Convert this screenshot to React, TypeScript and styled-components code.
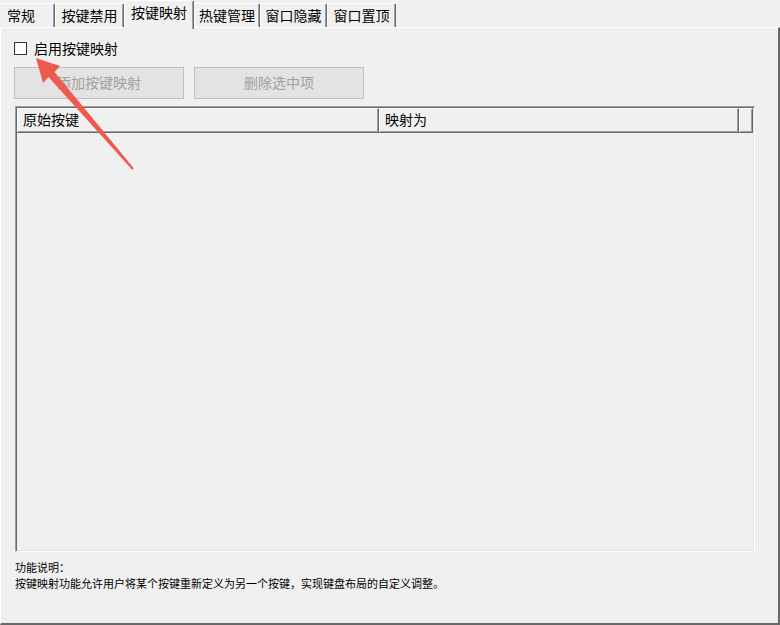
import React from 'react';
import styled, { createGlobalStyle } from 'styled-components';

const GlobalStyle = createGlobalStyle`
  html, body {
    margin: 0;
    padding: 0;
    background: #f0f0f0;
  }
  body {
    font-family: "Noto Sans CJK SC", "Noto Sans", sans-serif;
    color: #000;
  }
`;

const Window = styled.div`
  position: relative;
  width: 780px;
  height: 625px;
  background: #f0f0f0;
  display: flex;
  flex-direction: column;
  overflow: hidden;
`;

const TabStrip = styled.div`
  height: 27px;
  margin-left: -13px;
  display: flex;
  align-items: flex-end;
  position: relative;
  z-index: 1;
`;

const Tab = styled.div<{ $active?: boolean; $width: number }>`
  box-sizing: border-box;
  width: ${({ $width }) => $width}px;
  height: ${({ $active }) => ($active ? '29px' : '24px')};
  margin-bottom: ${({ $active }) => ($active ? '-2px' : '0')};
  padding-top: ${({ $active }) => ($active ? '1px' : '1px')};
  background: #f0f0f0;
  border-top: 1px solid #fff;
  border-left: 1px solid #fff;
  border-right: 1px solid #696969;
  box-shadow: inset -1px 0 0 #a0a0a0;
  border-radius: 2px 2px 0 0;
  font-size: 14px;
  line-height: 20px;
  text-align: center;
  white-space: nowrap;
`;

const Panel = styled.div`
  flex: 1;
  display: flex;
  flex-direction: column;
  box-sizing: border-box;
  border-top: 1px solid #fff;
  border-left: 1px solid #fff;
  border-right: 2px solid #696969;
  border-bottom: 2px solid #696969;
  padding: 13px 23px 0 13px;
`;

const CheckRow = styled.label`
  display: flex;
  align-items: center;
  gap: 7px;
  height: 14px;
  font-size: 14px;
`;

const CheckBox = styled.span`
  box-sizing: border-box;
  width: 13px;
  height: 13px;
  border: 1px solid #333;
  background: #fff;
`;

const ButtonRow = styled.div`
  display: flex;
  gap: 10px;
  margin-top: 12px;
`;

const Button = styled.button`
  box-sizing: border-box;
  width: 170px;
  height: 32px;
  background: #e3e3e3;
  border: 1px solid #bfbfbf;
  color: #a0a0a0;
  font-family: inherit;
  font-size: 14px;
  padding: 0 0 2px;
`;

const ListView = styled.div`
  flex: 1;
  margin: 7px 0 0 1px;
  width: 740px;
  max-height: 446px;
  box-sizing: border-box;
  border-top: 1px solid #a0a0a0;
  border-left: 1px solid #a0a0a0;
  border-right: 1px solid #fff;
  border-bottom: 1px solid #fff;
  box-shadow: inset 1px 1px 0 #696969, inset -1px -1px 0 #e3e3e3;
  padding: 1px;
  display: flex;
  flex-direction: column;
`;

const HeaderRow = styled.div`
  display: flex;
  height: 24px;
  border-bottom: 1px solid #696969;
  box-shadow: 0 -1px 0 #a0a0a0 inset;
`;

const HeaderCell = styled.div<{ $width?: number }>`
  box-sizing: border-box;
  width: ${({ $width }) => ($width ? `${$width}px` : 'auto')};
  flex: ${({ $width }) => ($width ? 'none' : '1')};
  border-top: 1px solid #fff;
  border-left: 1px solid #fff;
  border-right: 1px solid #696969;
  box-shadow: inset -1px 0 0 #a0a0a0;
  padding-left: 5px;
  font-size: 14px;
  line-height: 21px;
`;

const ListBody = styled.div`
  flex: 1;
  background: #f0f0f0;
`;

const Description = styled.div`
  margin-top: 7px;
  padding-left: 1px;
  font-size: 11px;
  line-height: 16px;
`;

const ArrowOverlay = styled.svg`
  position: absolute;
  left: 0;
  top: 0;
  width: 780px;
  height: 625px;
  pointer-events: none;
  z-index: 5;
`;

const tabs = [
  { label: '常规', width: 68 },
  { label: '按键禁用', width: 69 },
  { label: '按键映射', width: 70, active: true },
  { label: '热键管理', width: 66 },
  { label: '窗口隐藏', width: 67 },
  { label: '窗口置顶', width: 69 },
];

export default function App() {
  return (
    <Window>
      <GlobalStyle />
      <TabStrip>
        {tabs.map(t => (
          <Tab key={t.label} $width={t.width} $active={t.active}>
            {t.label}
          </Tab>
        ))}
      </TabStrip>
      <Panel>
        <CheckRow>
          <CheckBox />
          启用按键映射
        </CheckRow>
        <ButtonRow>
          <Button disabled>添加按键映射</Button>
          <Button disabled>删除选中项</Button>
        </ButtonRow>
        <ListView>
          <HeaderRow>
            <HeaderCell $width={362}>原始按键</HeaderCell>
            <HeaderCell $width={360}>映射为</HeaderCell>
            <HeaderCell />
          </HeaderRow>
          <ListBody />
        </ListView>
        <Description>
          功能说明：
          <br />
          按键映射功能允许用户将某个按键重新定义为另一个按键，实现键盘布局的自定义调整。
        </Description>
      </Panel>
      <ArrowOverlay viewBox="0 0 780 625">
        <polygon
          points="36,58 60,66 54.5,72 133.8,168.3 132.2,169.7 48.5,77 43,83"
          fill="#ee5a50"
        />
      </ArrowOverlay>
    </Window>
  );
}
